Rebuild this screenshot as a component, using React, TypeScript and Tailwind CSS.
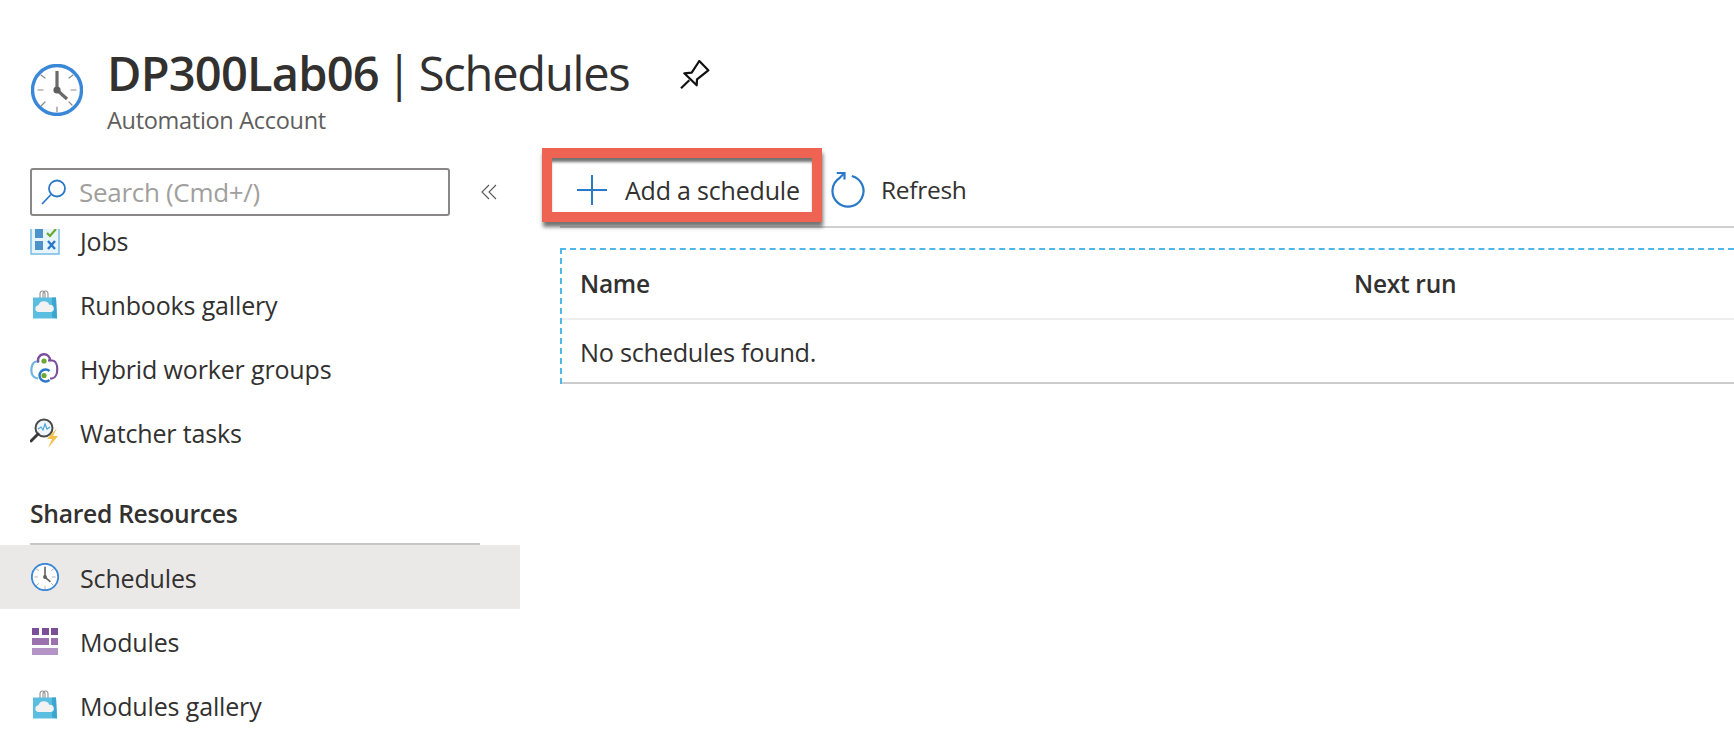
import React from "react";

const font = { fontFamily: '"Open Sans", "Noto Sans", sans-serif' };

function Clock({ size, sw = 3 }: { size: number; sw?: number }) {
  return (
    <svg width={size} height={size} viewBox="0 0 52 52" className="shrink-0">
      <circle cx="26" cy="26" r="24.5" fill="#fff" stroke="#3a87d8" strokeWidth={sw} />
      <g stroke="#8a8a8a" strokeWidth="1.2" strokeLinecap="round">
        <path d="M26 43v5M12 26H7M45 26h-5M14 14l-4-3M38 14l4-3M14 38l-4 4M38 38l3 3" />
      </g>
      <path d="M26 7v19" stroke="#6b6b6b" strokeWidth="3.2" />
      <path d="M26 26l10 9" stroke="#6b6b6b" strokeWidth="3.2" />
      <circle cx="26" cy="26" r="3.6" fill="#5f5f5f" />
    </svg>
  );
}

function Jobs() {
  return (
    <svg width="30" height="28" viewBox="0 0 30 28" className="shrink-0">
      <rect x="1" y="1" width="28" height="26" fill="#e8f4fb" stroke="#7cc0e6" strokeWidth="1.6" />
      <rect x="5" y="2" width="8" height="9" fill="#4d93c9" />
      <rect x="5" y="14" width="8" height="9" fill="#4d93c9" />
      <path d="M17 6l3 3 6-7" fill="none" stroke="#6aa82e" strokeWidth="2.2" />
      <path d="M18 14l7 8M25 14l-7 8" stroke="#2a79c9" strokeWidth="2.4" />
    </svg>
  );
}

function Bag() {
  return (
    <svg width="26" height="30" viewBox="0 0 26 30">
      <path d="M8 9V4c0-4 5-4 5 0v5M11 9V4c0-4 5-4 5 0v5" fill="none" stroke="#999" strokeWidth="1.2" />
      <path d="M1 7.5h23l1 21-24 0z" fill="#5bbde0" />
      <path d="M20 7.5h4l1 21-5-1z" fill="#3aa6d0" />
      <path d="M6 22a3.4 3.4 0 0 1 .4-6.7 5.8 5.8 0 0 1 11-.4 3.6 3.6 0 0 1 1.6 7.1z" fill="#f2f2f2" />
    </svg>
  );
}

function Hybrid() {
  return (
    <svg width="30" height="32" viewBox="0 0 30 32" fill="none">
      <path d="M9 8.5H7C1 8.5.8 18 2 21c1 3 3 4 6 4.5" stroke="#6fb5de" strokeWidth="2.2" />
      <path d="M8.5 9.5A6 6 0 1 1 20 8" stroke="#7c4f9e" strokeWidth="2.4" />
      <path d="M18 7.5h4c7 0 7 17 0 18h-2" stroke="#7c4f9e" strokeWidth="2.2" />
      <path d="M19.5 18a6 6 0 1 0 0 9" stroke="#2a79c9" strokeWidth="2.4" />
      <circle cx="14" cy="8" r="2.6" fill="#6aa82e" />
      <circle cx="14" cy="22.5" r="2.6" fill="#6aa82e" />
    </svg>
  );
}

function Watcher() {
  return (
    <svg width="30" height="32" viewBox="0 0 30 32">
      <circle cx="14" cy="11" r="8.5" fill="#eef6fb" stroke="#4a4a4a" strokeWidth="2" />
      <path d="M8 12l3-2 2 3 2-6 2 5 3-2" fill="none" stroke="#4fa3d8" strokeWidth="1.2" />
      <path d="M8 17L1 24" stroke="#3a3a3a" strokeWidth="3" strokeLinecap="round" />
      <path d="M27 11l-10 11h5l-4 9 10-12h-5z" fill="#f2c14a" />
    </svg>
  );
}

function ModulesIcon() {
  return (
    <svg width="28" height="28" viewBox="0 0 28 28">
      <g fill="#7b4f96">
        <rect x="1" y="1" width="7" height="7" />
        <rect x="11" y="1" width="7" height="7" />
        <rect x="20" y="1" width="7" height="7" />
      </g>
      <rect x="1" y="11" width="17" height="7" fill="#9a72ae" />
      <rect x="20" y="11" width="7" height="7" fill="#9a72ae" />
      <rect x="1" y="21" width="26" height="7" fill="#b394c4" />
    </svg>
  );
}

function Row({ icon, label, active, lower }: { icon: React.ReactNode; label: string; active?: boolean; lower?: boolean }) {
  return (
    <div className={`flex h-16 items-center pl-[30px] shrink-0 ${active ? "bg-[#ebe9e7]" : ""}`}>
      <span className="flex w-[30px] justify-center">{icon}</span>
      <span className={`ml-[20px] text-[25px] leading-none text-[#323130] tracking-[-0.15px] whitespace-nowrap ${lower ? "pt-[3px]" : ""}`}>{label}</span>
    </div>
  );
}

export default function App() {
  return (
    <div style={font} className="h-[742px] w-[1734px] overflow-hidden bg-white text-[#323130]">
      <header className="flex h-[148px] pl-[31px]">
        <div className="mt-[64px]"><Clock size={52} sw={3.4} /></div>
        <div className="ml-[24px] mt-[41px]">
          <div className="flex items-center">
            <h1 className="text-[47px] leading-[64px] tracking-[-0.8px] [word-spacing:-4px] whitespace-nowrap">
              <span className="font-semibold">DP300Lab06</span> | <span className="tracking-[-1.2px]">Schedules</span>
            </h1>
            <svg width="32" height="32" viewBox="0 0 32 32" className="ml-[50px] mt-[6px]" fill="none" stroke="#111" strokeWidth="2.2" strokeLinejoin="round">
              <path d="M4.3 13.3L11.7 12.7 19.3 1 28.3 10.3 17 19.3 16.7 25.3z" />
              <path d="M1 28.3L9.3 20.3" />
            </svg>
          </div>
          <div className="mt-[-1px] text-[23.5px] leading-[32px] text-[#605e5c] tracking-[-0.3px] whitespace-nowrap">Automation Account</div>
        </div>
      </header>
      <div className="flex">
        <aside className="flex h-[594px] w-[520px] shrink-0 flex-col">
          <div className="flex items-center pl-[30px] pt-[20px]">
            <div className="flex h-[48px] w-[420px] items-center rounded-[3px] border-2 border-[#8a8886] pl-[8px]">
              <svg width="28" height="28" viewBox="0 0 28 28" fill="none" stroke="#2a79c9" strokeWidth="1.8" className="shrink-0">
                <circle cx="17" cy="10.5" r="8" />
                <path d="M11 16.5L2 26" />
              </svg>
              <span className="ml-[11px] text-[26px] leading-none text-[#a19f9d] tracking-[-0.3px] whitespace-nowrap">Search (Cmd+/)</span>
            </div>
            <svg width="18" height="16" viewBox="0 0 18 16" className="ml-[30px]" fill="none" stroke="#555" strokeWidth="1.1">
              <path d="M9 1L2 8l7 7M16 1L9 8l7 7" />
            </svg>
          </div>
          <div className="mt-[8px] flex min-h-0 flex-1 flex-col overflow-hidden pt-[5px]">
            <div className="flex h-[44px] shrink-0 items-start pl-[30px]">
              <span className="flex h-[26px] w-[30px] items-end justify-center overflow-hidden"><Jobs /></span>
              <span className="ml-[20px] text-[25px] leading-none tracking-[-0.15px]">Jobs</span>
            </div>
            <Row icon={<Bag />} label="Runbooks gallery" />
            <Row icon={<Hybrid />} label="Hybrid worker groups" />
            <Row icon={<Watcher />} label="Watcher tasks" />
            <div className="ml-[30px] mr-[40px] mt-[15px] h-[65px] shrink-0 border-b-2 border-[#c8c6c4] pt-[18px] text-[24.7px] font-semibold leading-[32px] tracking-[-0.3px] whitespace-nowrap">
              Shared Resources
            </div>
            <Row icon={<Clock size={28} sw={3.5} />} label="Schedules" active lower />
            <Row icon={<ModulesIcon />} label="Modules" lower />
            <Row icon={<Bag />} label="Modules gallery" lower />
          </div>
        </aside>
        <main className="min-w-0 flex-1">
          <div className="ml-[40px] flex h-[80px] items-start border-b-2 border-[#cfcfcf]">
            <div className="ml-[-18px] flex h-[74px] w-[280px] shrink-0 items-center border-[10px] border-[#ee6352] pl-[25px] pt-[10px] shadow-[1px_5px_4px_rgba(0,0,0,0.55),inset_0_5px_3px_-1px_rgba(0,0,0,0.55)]">
              <svg width="30" height="30" viewBox="0 0 30 30" stroke="#2a79c9" strokeWidth="2" className="shrink-0"><path d="M15 0v30M0 15h30" /></svg>
              <span className="ml-[18px] text-[25px] leading-none tracking-[-0.2px] whitespace-nowrap">Add a schedule</span>
            </div>
            <div className="ml-[9px] flex h-[74px] items-center pt-[10px]">
              <svg width="34" height="36" viewBox="0 0 34 36" fill="none" stroke="#2a79c9" strokeWidth="2.2" className="shrink-0">
                <path d="M20.8 4A15.5 15.5 0 1 1 8.6 6L13 1.5" />
                <path d="M5.7 1H13.5V7.5" />
              </svg>
              <span className="ml-[16px] text-[24.5px] leading-none tracking-[-0.3px]">Refresh</span>
            </div>
          </div>
          <div className="ml-[40px] mt-[20px] border-l-2 border-t-2 border-dashed border-[#50b8e8]">
            <div className="flex h-[70px] items-center border-b-2 border-[#eeeeee] pl-[18px] text-[24.5px] font-semibold tracking-[-0.3px]">
              <span className="w-[774px]">Name</span>
              <span>Next run</span>
            </div>
            <div className="flex h-[64px] items-center border-b-2 border-b-[#cccccc] [border-bottom-style:solid] pl-[18px] pt-[3px] text-[25.3px] tracking-[-0.3px]">
              No schedules found.
            </div>
          </div>
        </main>
      </div>
    </div>
  );
}
